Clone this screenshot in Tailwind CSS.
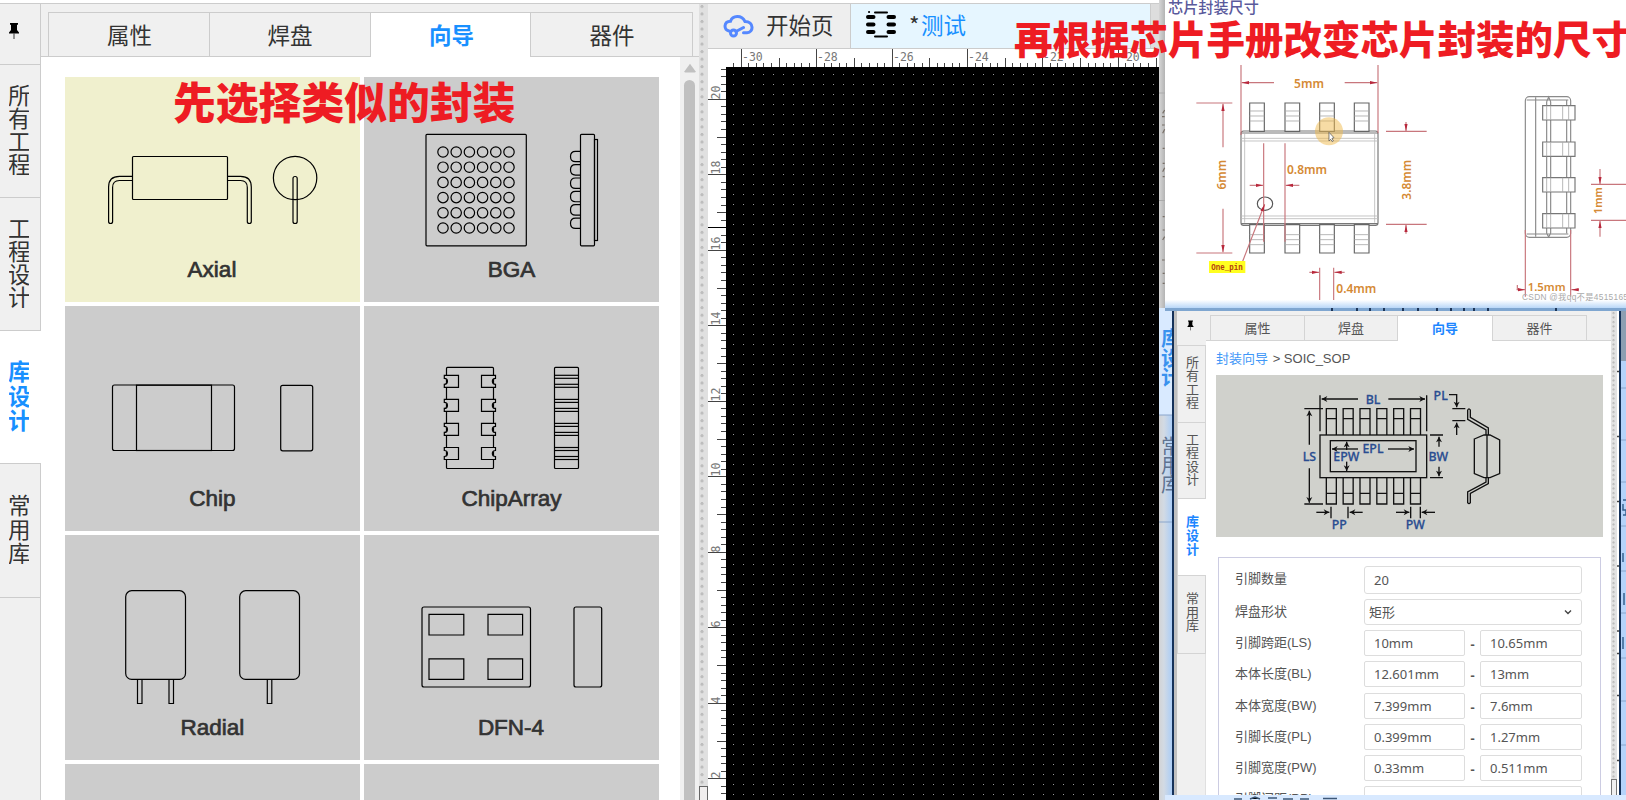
<!DOCTYPE html>
<html lang="zh-CN">
<head>
<meta charset="utf-8">
<title>封装向导</title>
<script src="https://cdn.jsdelivr.net/npm/@tailwindcss/browser@4"></script>
</head>
<body class="bg-white">
<div class="relative flex h-[800px] w-[1626px] overflow-hidden bg-white pt-[3px] font-['Noto_Sans_CJK_SC',sans-serif] text-[22.5px] text-[#333]">

  <!-- left vertical tabs -->
  <nav class="flex w-[41px] shrink-0 flex-col border-t border-[#ccc] bg-[#f0f0f0] text-[22.5px] leading-[23px]">
    <div class="h-[61px] border-r border-b border-[#ccc]">
      <svg class="ml-[9px] mt-[18px]" width="10" height="18" viewBox="0 0 10 18"><path d="M1 1h8v1.500l-1 .5v5l2 2.500v1H0v-1L2 8V3l-1-.5z"/><path d="M5 11v6" stroke="#555" stroke-width="1.200"/></svg>
    </div>
    <div class="h-[133px] overflow-hidden border-r border-b border-[#ccc] pl-[9px] pt-[18px]"><div class="w-[20px] overflow-hidden"><div class="-ml-px w-[23px] break-all">所有工程</div></div></div>
    <div class="h-[133px] overflow-hidden border-r border-b border-[#ccc] pl-[9px] pt-[18px]"><div class="w-[20px] overflow-hidden"><div class="-ml-px w-[23px] break-all">工程设计</div></div></div>
    <div class="h-[133px] overflow-hidden border-b border-[#ccc] bg-white pl-[9px] pt-[27px] font-bold leading-[24.500px] text-[#1890ff]"><div class="w-[20px] overflow-hidden"><div class="-ml-px w-[23px] break-all">库设计</div></div></div>
    <div class="h-[134px] overflow-hidden border-r border-b border-[#ccc] pl-[9px] pt-[28px] leading-[24px]"><div class="w-[20px] overflow-hidden"><div class="-ml-px w-[23px] break-all">常用库</div></div></div>
    <div class="grow border-r border-[#ccc]"></div>
  </nav>

  <!-- wizard panel -->
  <section class="flex w-[658px] shrink-0 flex-col border-t border-[#ccc]">
    <div class="flex h-[53px] shrink-0 bg-[#f0f0f0] text-center">
      <div class="w-[7px] border-b border-[#ccc]"></div>
      <div class="mt-[8px] w-[161px] border-t border-b border-l border-[#ccc] pl-px leading-[42px]">属性</div>
      <div class="mt-[8px] w-[162px] border border-[#ccc] leading-[42px]">焊盘</div>
      <div class="mt-[8px] w-[159px] border-t border-[#ccc] bg-white pl-[2px] font-bold leading-[42px] text-[#1890ff]">向导</div>
      <div class="mt-[8px] w-[163px] border border-[#ccc] pl-px leading-[42px]">器件</div>
      <div class="grow border-b border-[#ccc]"></div>
    </div>
    <div class="flex min-h-0 grow">
      <div class="grid w-[639px] auto-rows-[225px] grid-cols-[295px_295px] gap-1 overflow-hidden pl-[24px] pt-[20px]">
        <svg class="bg-[#f0f0ce]" width="295" height="225" viewBox="65 77 295 225" fill="none" stroke="#000" stroke-width="1.200">
          <rect x="132.500" y="156.500" width="95" height="43" rx="1"/>
          <path d="M132.500 176.300H119.500Q108.600 176.300 108.600 187V221.500Q108.600 223.500 110.600 223.500T112.600 221.500V187.500Q112.600 180.500 119.500 180.500H132.500M227.500 176.300H240.500Q251.300 176.300 251.300 187V221.500Q251.300 223.500 249.300 223.500T247.300 221.500V187.500Q247.300 180.500 240.500 180.500H227.500"/>
          <circle cx="295.100" cy="178" r="21.700"/><rect x="293" y="176.500" width="4.200" height="47" rx="2"/>
          <text x="212" y="277" text-anchor="middle" font-family="Liberation Sans" font-size="22.500" fill="#333" stroke="#333" stroke-width=".7">Axial</text>
        </svg>
        <svg class="bg-[#ccc]" width="295" height="225" viewBox="364 77 295 225" fill="none" stroke="#000" stroke-width="1.200">
          <rect x="426" y="134.300" width="100.300" height="111.500" rx="1"/>
          <g id="balls"></g>
          <rect x="580.500" y="134.300" width="14" height="111.500" rx="1"/><rect x="594.500" y="139.500" width="3" height="101"/>
          <text x="511.500" y="277" text-anchor="middle" font-family="Liberation Sans" font-size="22.500" fill="#333" stroke="#333" stroke-width=".7">BGA</text>
        </svg>
        <svg class="bg-[#ccc]" width="295" height="225" viewBox="65 306 295 225" fill="none" stroke="#000" stroke-width="1.200">
          <rect x="112.500" y="385" width="122" height="65.500" rx="2"/><rect x="136.500" y="385.200" width="75" height="65.300"/><rect x="280.700" y="385.300" width="32" height="65.500" rx="2"/>
          <text x="212.300" y="506" text-anchor="middle" font-family="Liberation Sans" font-size="22.500" fill="#333" stroke="#333" stroke-width=".7">Chip</text>
        </svg>
        <svg class="bg-[#ccc]" width="295" height="225" viewBox="364 306 295 225" fill="none" stroke="#000" stroke-width="1.200">
          <rect x="446.500" y="367.400" width="47" height="101.100" rx="1"/><rect x="554.500" y="367.400" width="24" height="101.100" rx="1"/>
          <g id="pads"></g>
          <text x="511.500" y="506" text-anchor="middle" font-family="Liberation Sans" font-size="22.500" fill="#333" stroke="#333" stroke-width=".7">ChipArray</text>
        </svg>
        <svg class="bg-[#ccc]" width="295" height="225" viewBox="65 535 295 225" fill="none" stroke="#000" stroke-width="1.200">
          <rect x="125.700" y="590.700" width="59.800" height="88.700" rx="6"/><rect x="239.700" y="590.700" width="59.800" height="88.700" rx="6"/>
          <path d="M137.500 679.500v24h4.500v-24M169 679.500v24h4.500v-24M267.300 679.500v24h4.500v-24"/>
          <text x="212.300" y="735" text-anchor="middle" font-family="Liberation Sans" font-size="22.500" fill="#333" stroke="#333" stroke-width=".7">Radial</text>
        </svg>
        <svg class="bg-[#ccc]" width="295" height="225" viewBox="364 535 295 225" fill="none" stroke="#000" stroke-width="1.200">
          <rect x="422" y="607" width="108.500" height="80" rx="2"/><rect x="574" y="607" width="27.700" height="80" rx="2"/>
          <path d="M429 614.300h34.800v20.700h-34.800zM488 614.300h34.600v20.700h-34.600zM429 658.800h34.800v20.500h-34.800zM488 658.800h34.600v20.500h-34.600z"/>
          <text x="511" y="735" text-anchor="middle" font-family="Liberation Sans" font-size="22.500" fill="#333" stroke="#333" stroke-width=".7">DFN-4</text>
        </svg>
        <div class="bg-[#ccc]"></div>
        <div class="bg-[#ccc]"></div>
      </div>
      <div class="flex w-[19px] flex-col bg-[#f0f0f0] pl-[4px]">
        <svg class="mt-[6px] h-[10px] w-[12px] shrink-0" viewBox="0 0 12 10"><path d="M6 0.800L11.500 8.200Q11.800 9.500 10.500 9.500H1.500Q.2 9.500 .5 8.200z" fill="#c0c0c0"/></svg>
        <div class="mt-[7px] w-[11px] grow rounded-t-full bg-[#c0c0c0]"></div>
      </div>
    </div>
  </section>

  <!-- splitter -->
  <div class="flex w-[9px] shrink-0 flex-col border-t border-[#ccc] bg-[#e0e0e0]">
    <div class="ml-[1px] w-[4px] grow bg-[radial-gradient(circle_at_2px_2.500px,#bdbdbd_1.300px,transparent_1.900px)] bg-[size:4px_7.540px]"></div>
    <div class="h-[14px] w-[9px] border border-b-0 border-[#666] bg-[#f0eeee]"></div>
  </div>

  <!-- editor -->
  <main class="flex w-[451px] shrink-0 flex-col border-t border-[#ccc]">
    <div class="flex h-[45px] shrink-0 border-b border-[#ccc] bg-[#ddd]">
      <div class="flex w-[143px] items-center border-r border-[#ccc] bg-[#eee] pl-[15px]">
        <svg class="mr-[12px]" width="31" height="23" viewBox="0 0 31 23" fill="none" stroke="#5588ff" stroke-width="3" stroke-linecap="round"><path d="M6 16C0.500 14.500 0.500 6.500 7.500 6.200C9.500 0.500 18.500-.5 22 6.500C31 6.500 31 17.500 24 17.800H20.500M13 16.500L20.500 12.500"/><circle cx="10.500" cy="18" r="3"/></svg>
        <span class="relative -top-[2px] leading-[42px]">开始页</span>
      </div>
      <div class="flex w-[300px] items-center border-r border-[#ccc] bg-[#e6f6ff] pl-[15px]">
        <svg class="relative -top-[2px] mr-[12px]" width="30" height="30" viewBox="0 0 30 30" stroke="#000" fill="none" stroke-linecap="round"><path stroke-width="4" d="M2 8h5.500M22.500 8h5.500M2 15.500h5.500M22.500 15.500h5.500M2 23h5.500M22.500 23h5.500"/><path stroke-width="2" d="M9 3.500h12M9 27.500h12M3 3h.1"/></svg>
        <span class="relative -top-[2px] ml-px leading-[42px]"><span class="tracking-[1.500px]">*</span><span class="text-[#1890ff]">测试</span></span>
      </div>
    </div>
    <div class="flex min-h-0 grow flex-col bg-white">
      <svg id="hruler" class="h-[18px] w-[451px] shrink-0" viewBox="708 49 451 18"></svg>
      <div class="flex min-h-0 grow">
        <svg id="vruler" class="h-[733px] w-[18px] shrink-0" viewBox="708 67 18 733"></svg>
        <svg class="h-[733px] w-[433px] shrink-0 bg-black" viewBox="726 67 433 733"><defs><pattern id="dots" patternUnits="userSpaceOnUse" x="733" y="74" width="10" height="10"><rect width="1" height="1" fill="#999"/></pattern></defs><rect x="726" y="67" width="433" height="733" fill="url(#dots)"/></svg>
      </div>
    </div>
  </main>

  <!-- captured windows stacked over the editor -->
  <aside class="absolute right-0 top-0 flex h-[800px] w-[467px] flex-col bg-[#c6c6c6]">
    <div class="flex h-[308px] shrink-0">
      <svg class="h-[308px] w-[467px]" viewBox="1159 0 467 308">
        <defs>
          <marker id="ra" markerUnits="userSpaceOnUse" markerWidth="24" markerHeight="12" refX="22" refY="6" orient="auto-start-reverse"><path d="M0 1L22 6L0 11z" fill="#b8283c"/></marker>
          <linearGradient id="edge" x1="0" x2="1"><stop offset="0" stop-color="#d6d6d6"/><stop offset="1" stop-color="#b4b4b4"/></linearGradient>
          <linearGradient id="fade" x1="0" x2="0" y1="0" y2="1"><stop offset="0" stop-color="#fff"/><stop offset="1" stop-color="#b9d7f8"/></linearGradient>
        </defs>
        <rect x="1159" y="0" width="6" height="308" fill="url(#edge)"/>
        <rect x="1165" y="0" width="461" height="308" fill="#fff"/>
        <rect x="1165" y="300" width="461" height="8" fill="url(#fade)"/>
        <path d="M1159 93h6M1159 200.500h6" stroke="#aaa"/>
        <g transform="translate(1150 0) scale(.333333)" fill="none" stroke-width="3.500">
          <path d="M38 340l6-10M36 350h8M36 375h8M38 400l6-12M38 445h6M38 490h6M38 515l6-12M38 530h6M38 650h6M38 690h6M38 720l6-10M36 780h8M38 820h6M38 850h6" stroke="#776e66"/>
          <text x="54" y="39" font-size="45.500" font-weight="500" fill="#5a5a9c" font-family="Noto Sans CJK SC">芯片封装尺寸</text>
          <g stroke="#8a8a8a">
            <rect x="273" y="393" width="411" height="283" rx="8" stroke="#777"/><path d="M273 399H684M273 671H684" stroke="#777"/>
            <path d="M273 415H684M273 423H684M273 648H684M273 656H684M284 400V668M674 400V668" stroke="#bbb" stroke-width="2.500"/>
            <path d="M299 309h44v85h-44zM405 309h44v85h-44zM509 309h44v85h-44zM613 309h44v85h-44zM299 674h44v85h-44zM405 674h44v85h-44zM509 674h44v85h-44zM613 674h44v85h-44z" fill="#fff" stroke="#666"/>
            <path d="M299 333h44m62 0h44m60 0h44m60 0h44M299 348h44m62 0h44m60 0h44m60 0h44M299 363h44m62 0h44m60 0h44m60 0h44M299 704h44m62 0h44m60 0h44m60 0h44M299 719h44m62 0h44m60 0h44m60 0h44M299 734h44m62 0h44m60 0h44m60 0h44" stroke="#aaa" stroke-width="2.500"/>
            <ellipse cx="345" cy="611" rx="23" ry="20" stroke="#555"/>
            <rect x="1126" y="290" width="136" height="422" rx="12"/><path d="M1157 292V710M1190 305V700M1202 305V700M1190 305l6-14l6 14M1190 700l6 11l6-11M1250 300V700M1130 300h125M1130 702h125"/>
            <path d="M1178 317h97v43h-97zM1178 426h97v43h-97zM1178 533h97v43h-97zM1178 641h97v43h-97z" fill="#fff" stroke="#777"/>
            <path d="M1190 317v43m0 66v43m0 64v43m0 65v43M1202 317v43m0 66v43m0 64v43m0 65v43M1238 317v43m0 66v43m0 64v43m0 65v43M1256 317v43m0 66v43m0 64v43m0 65v43" stroke="#aaa" stroke-width="2.500"/>
          </g>
          <g stroke="#c8767c">
            <path d="M273 195V405M684 195V400M139 309H247M139 759H247M708 394H830M708 673H830M341 430V725M405 430V725M509 803V900M551 803V900M1126 690V890M1262 690V890M1323 553H1428M1323 661H1428M1102 855V869"/>
            <path d="M372 248H275M584 248H682M219 442V311M219 626V757M768 366V393M768 701V675M299 556H339M448 556H407M478 817H507M584 817H553M1350 507V552M1350 710V663M1100 869H1125M1287 869H1264M276 789L344 613" marker-end="url(#ra)"/>
          </g>
          <circle cx="537" cy="394" r="42" fill="#efb94b" fill-opacity=".5"/>
          <path d="M537 397V423L542 418L547 425L550 423L546 415L552 413z" fill="#fff" stroke="#444" stroke-width="2"/>
          <rect x="177" y="783" width="109" height="36" fill="#ffff20"/>
          <text x="231" y="809" text-anchor="middle" font-family="Liberation Mono" font-weight="bold" font-size="27" textLength="94" lengthAdjust="spacingAndGlyphs" fill="#b33a10">One_pin</text>
          <g fill="#d58a35" font-family="Noto Sans" font-weight="600" font-size="36" text-anchor="middle">
            <text x="477" y="265">5mm</text><text x="471" y="523">0.8mm</text><text x="619" y="880">0.4mm</text><text x="1190" y="872" font-size="34">1.5mm</text>
            <text transform="translate(228 524) rotate(-90)">6mm</text><text transform="translate(782 539) rotate(-90)">3.8mm</text><text transform="translate(1355 602) rotate(-90)" font-size="32">1mm</text>
          </g>
          <text x="1116" y="901" font-family="Liberation Sans,Noto Sans CJK SC" font-size="25" textLength="318" fill="#aaa">CSDN @我qq不是4515165</text>
        </g>
      </svg>
    </div>
    <div class="relative flex min-h-0 grow flex-col">
      <svg class="absolute left-0 top-0 h-[492px] w-[467px]" viewBox="1159 308 467 492" font-family="Noto Sans CJK SC">
        <defs><linearGradient id="glow" x1="0" x2="1"><stop offset="0" stop-color="#d2d3d5"/><stop offset=".35" stop-color="#d2dae4"/><stop offset="1" stop-color="#a6cbf8"/></linearGradient></defs>
        <rect x="1159" y="308" width="14" height="492" fill="url(#glow)"/>
        <rect x="1159" y="308" width="14" height="107" fill="#d9eaff"/>
        <rect x="1621" y="308" width="5" height="492" fill="#b5d3fa"/><rect x="1621" y="308" width="5" height="53" fill="#8d9fb2"/>
        <rect x="1165" y="307" width="461" height="4" fill="#7fa6d0"/>
        <path d="M1332 308v3M1357 308v3M1370 308v3M1384 308v3M1403 308v3M1418 308v3M1437 308v3M1451 308v3M1464 308v3M1474 308v3M1488 308v3M1556 308v3" stroke="#1c3558" stroke-width="2"/>
        <g font-size="20" font-weight="bold" fill="#3a92ee"><text x="1161" y="346">库</text><text x="1161" y="366">设</text><text x="1161" y="385">计</text></g>
        <g font-size="20" fill="#5f7390"><text x="1161" y="454">常</text><text x="1161" y="473">用</text><text x="1161" y="492">库</text></g>
        <path d="M1159 415h14M1159 522h14M1621 388h5M1621 440h5M1621 482h5M1621 526h5M1621 571h5M1621 613h5M1621 658h5M1621 701h5M1621 745h5" stroke="#8aa6cc"/>
        <path d="M1623 500h3M1623 504v6h3v5h-3M1623 553v9M1624 593v12M1623 637v12" stroke="#36618f" fill="none" stroke-width="1.500"/>
        <rect x="1165" y="795" width="461" height="5" fill="#d8e9ff"/>
        <path d="M1234 799h8M1250 799l5-2l5 2M1268 798h9M1283 799h10M1300 799h9M1323 798.500h14" stroke="#3d5878" stroke-width="1.500"/>
      </svg>

      <div class="relative ml-[13px] mt-[3px] flex h-[484px] w-[449px] overflow-hidden border-x-2 border-[#14315a] bg-white text-[13px] text-[#555]">
        <div class="w-[3px] bg-[#c0c0c0]"></div>
        <nav class="flex w-[29px] shrink-0 flex-col bg-[#f0f0f0] leading-[13.300px]">
          <div class="h-[35px] border-b border-[#d4d4d4] pl-[10px] pt-[9px]"><svg width="7" height="11" viewBox="0 0 10 18"><path d="M1 1h8v1.500l-1 .5v5l2 2.500v1H0v-1L2 8V3l-1-.5z"/><path d="M5 11v6" stroke="#555" stroke-width="1.200"/></svg></div>
          <div class="h-[77px] border-x border-b border-[#d4d4d4] pl-[8px] pt-[9px]"><div class="w-[13px] break-all">所有工程</div></div>
          <div class="h-[76px] border-x border-b border-[#d4d4d4] pl-[8px] pt-[9px]"><div class="w-[13px] break-all">工程设计</div></div>
          <div class="h-[77px] border-b border-l border-[#d4d4d4] bg-white pl-[8px] pt-[15px] font-bold leading-[14px] text-[#1d86ff]"><div class="w-[13px] break-all">库设计</div></div>
          <div class="h-[78px] border-x border-b border-[#d4d4d4] pl-[8px] pt-[15px] leading-[13.500px]"><div class="w-[13px] break-all">常用库</div></div>
          <div class="grow border-r border-[#e0e0e0]"></div>
        </nav>
        <div class="flex w-[405px] shrink-0 flex-col">
          <div class="flex h-[30px] shrink-0 bg-[#f0f0f0] text-center leading-[24px]">
            <div class="w-[4px] border-b border-[#d4d4d4]"></div>
            <div class="mt-[4px] w-[94px] border-t border-b border-l border-[#d4d4d4]">属性</div>
            <div class="mt-[4px] w-[94px] border border-[#d4d4d4]">焊盘</div>
            <div class="mt-[4px] w-[94px] border-t border-[#d4d4d4] bg-white font-bold text-[#1d86ff]">向导</div>
            <div class="mt-[4px] w-[95px] border border-[#d4d4d4]">器件</div>
            <div class="grow border-b border-[#d4d4d4]"></div>
          </div>
          <div class="mt-[8px] h-[26px] shrink-0 pl-[10px] font-['Liberation_Sans','Noto_Sans_CJK_SC',sans-serif] leading-[20px]"><span class="text-[#3f97f7]">封装向导</span> <span class="ml-px">&gt; SOIC_SOP</span></div>
          <svg class="ml-[10px] h-[162px] w-[387px] shrink-0 bg-[#d0d1cc]" viewBox="1216 375 387 162">
            <defs><marker id="ba" markerUnits="userSpaceOnUse" markerWidth="24" markerHeight="24" refX="20" refY="10" orient="auto-start-reverse"><path d="M3 1L20 10L3 19L8 10z" fill="#111"/></marker></defs>
            <g transform="translate(1150 300) scale(.333333)" fill="none" stroke="#111" stroke-width="4">
              <rect x="510" y="405" width="320" height="128"/><rect x="541" y="422" width="257" height="93"/>
              <g id="pins"></g>
              <path d="M510 286V394M830 286V394M463 326H519M463 612H519M840 405H879M840 533H879M907 326H946M907 362H946M543 620V655M594 620V655M782 620V655M811 620V655"/>
              <path d="M624 297H515M715 297H825M478 434V332M478 505V608M867 440V410M867 500V529M897 284H920V322M920 405V368M624 447H546M714 447H792M590 450V425M590 485V513M499 637H538M638 637H599M738 637H778M855 637H815" marker-end="url(#ba)"/>
              <path d="M953 330Q957 323 961 330V352L1015 384V405M953 330V358L1008 390V405M1015 533V551L961 580V608Q957 614 953 608V576L1008 546V533M973 417L1002 405H1020L1049 420V521L1020 533H1002L973 521zM1011 405V533"/>
              <g stroke="#2a4d91" stroke-width=".8" fill="#2a4d91" font-family="Noto Sans" font-weight="500" font-size="37" text-anchor="middle">
                <text x="669" y="311">BL</text><text x="872" y="299">PL</text><text x="478" y="483">LS</text><text x="589" y="483">EPW</text><text x="669" y="459">EPL</text><text x="865" y="483">BW</text><text x="568" y="686">PP</text><text x="796" y="686">PW</text>
              </g>
            </g>
          </svg>
          <div class="ml-[12px] mt-[20px] flex w-[383px] grow flex-col border-x border-t border-[#ccccE2] pl-[16px] pt-[8px] font-['Noto_Sans','Noto_Sans_CJK_SC',sans-serif]">
            <div class="flex h-[33px] shrink-0"><div class="w-[129px] font-['Liberation_Sans','Noto_Sans_CJK_SC',sans-serif] leading-[26px]">引脚数量</div><div class="h-[28px] w-[218px] rounded-[3px] border border-[#ddd] pl-[9px] leading-[27px]">20</div></div>
            <div class="flex h-[31px] shrink-0"><div class="w-[129px] font-['Liberation_Sans','Noto_Sans_CJK_SC',sans-serif] leading-[26px]">焊盘形状</div><div class="flex h-[26px] w-[218px] items-center justify-between rounded-[3px] border border-[#ddd] pl-[4px] pr-[9px] leading-[23px]">矩形<svg width="8" height="6" viewBox="0 0 8 6" fill="none" stroke="#444" stroke-width="1.400"><path d="M1 1.500l3 3l3-3"/></svg></div></div>
            <div id="rows" class="shrink-0"></div>
          </div>
        </div>
        <div class="flex w-[6px] shrink-0 flex-col bg-[#e2e2e2]">
          <div class="ml-[1px] w-[3px] grow bg-[radial-gradient(circle_at_1.500px_2px,#bbb_0.900px,transparent_1.300px)] bg-[size:3px_4.500px]"></div>
          <div class="h-[16px] border border-b-0 border-[#777] bg-[#f0f0f0]"></div>
        </div>
        <svg class="w-[2px] grow" viewBox="1617 311 2 484" preserveAspectRatio="none"><path d="M1616 371.500h3M1616 436.500h3M1616 501.500h3M1616 566h3M1616 631h3M1616 653.500h3M1616 695.500h3M1616 760.500h3" stroke="#444" stroke-width="1.500"/></svg>
      </div>
    </div>
  </aside>

  <!-- captions -->
  <div class="absolute left-[173px] top-[68px] whitespace-nowrap text-[42.800px] font-black leading-[64px] text-[#ee1c23]">先选择类似的封装</div>
  <div class="absolute left-[1014px] top-[8px] whitespace-nowrap text-[38.500px] font-black leading-[58px] text-[#ee1c23]">再根据芯片手册改变芯片封装的尺寸</div>
</div>

<script>
const byId = id => document.getElementById(id);
// BGA: 6 x 6 ball grid and side bumps
let s = '';
for (let r = 0; r < 6; r++) {
  for (let c = 0; c < 6; c++) s += `<circle cx="${443 + c * 13.2}" cy="${152 + r * 15.2}" r="5.2"/>`;
  const y = 151.3 + r * 13.35;
  s += `<path d="M580.5 ${y}H575.5Q570.5 ${y} 570.5 ${y + 5.2}T575.5 ${y + 10.4}H580.5"/>`;
}
byId('balls').innerHTML = s;
// ChipArray: notched pads
s = '';
for (const c of [381.3, 405.4, 429.4, 453.5]) {
  s += `<path fill="#ccc" d="M458.500 ${c - 6}H444.300V${c - 3}C448.500 ${c - 3} 448.500 ${c + 3} 444.300 ${c + 3}V${c + 6}H458.500Z"/>`;
  s += `<path fill="#ccc" d="M481.500 ${c - 6}H495.500V${c - 3}C491.300 ${c - 3} 491.300 ${c + 3} 495.500 ${c + 3}V${c + 6}H481.500Z"/>`;
  for (const d of [-6, -3, 3, 6]) s += `<path d="M554 ${c + d}H579"/>`;
}
byId('pads').innerHTML = s;
// rulers
const snap = v => Math.floor(v) + 0.5;
s = '';
for (let i = -1; i < 56; i++) {
  const x = snap(741.3 + i * 7.54), m = ((i % 10) + 10) % 10;
  s += `<path stroke="#444" d="M${x} 67V${m === 0 ? 49 : m === 5 ? 58 : 63}"/>`;
  if (m === 0) s += `<text x="${x + 0.5}" y="61" font-family="DejaVu Sans Mono" font-size="11.5" fill="#777">${-30 + i / 5}</text>`;
}
byId('hruler').innerHTML = s;
s = '';
for (let i = -4; i < 94; i++) {
  const y = snap(99.3 + i * 7.55), m = ((i % 10) + 10) % 10;
  s += `<path stroke="#444" d="M726 ${y}H${m === 0 ? 708 : m === 5 ? 717 : 721}"/>`;
  if (m === 0) s += `<text transform="translate(720 ${y}) rotate(-90)" font-family="DejaVu Sans Mono" font-size="11.5" fill="#777">${20 - i / 5}</text>`;
}
byId('vruler').innerHTML = s + '<path stroke="#000" d="M708 227.500H726"/>';
// SOIC pins
s = '';
for (let i = 0; i < 6; i++) {
  const x = 529 + i * 50.5;
  s += `<path d="M${x} 405V326h30V405M${x} 356h30M${x} 533V612h30V533M${x} 580h30"/>`;
}
byId('pins').innerHTML = s;
// give every dimension line its own arrowhead
document.querySelectorAll('path[marker-end]').forEach(p => {
  p.getAttribute('d').split('M').filter(Boolean).forEach(d => {
    const q = p.cloneNode();
    q.setAttribute('d', 'M' + d);
    p.before(q);
  });
  p.remove();
});
// package dimensions
const rows = [['引脚跨距(LS)', '10mm', '10.65mm'], ['本体长度(BL)', '12.601mm', '13mm'], ['本体宽度(BW)', '7.399mm', '7.6mm'], ['引脚长度(PL)', '0.399mm', '1.27mm'], ['引脚宽度(PW)', '0.33mm', '0.511mm']];
byId('rows').innerHTML = rows.map(([l, a, b]) => `<div class="flex h-[31.250px]"><div class="w-[129px] font-['Liberation_Sans','Noto_Sans_CJK_SC',sans-serif] leading-[25px]">${l}</div><div class="h-[26px] w-[101px] rounded-[2px] border border-[#ddd] pl-[9px] leading-[25px]">${a}</div><div class="w-[15px] text-center font-bold leading-[28px]">-</div><div class="h-[26px] w-[102px] rounded-[2px] border border-[#ddd] pl-[9px] leading-[25px]">${b}</div></div>`).join('') +
  `<div class="flex h-[31.250px]"><div class="w-[129px] font-['Liberation_Sans','Noto_Sans_CJK_SC',sans-serif] leading-[25px]">引脚间距(PP)</div><div class="h-[26px] w-[218px] rounded-[2px] border border-[#ddd] pl-[9px] leading-[25px]">1.27mm</div></div>`;
</script>
</body>
</html>
